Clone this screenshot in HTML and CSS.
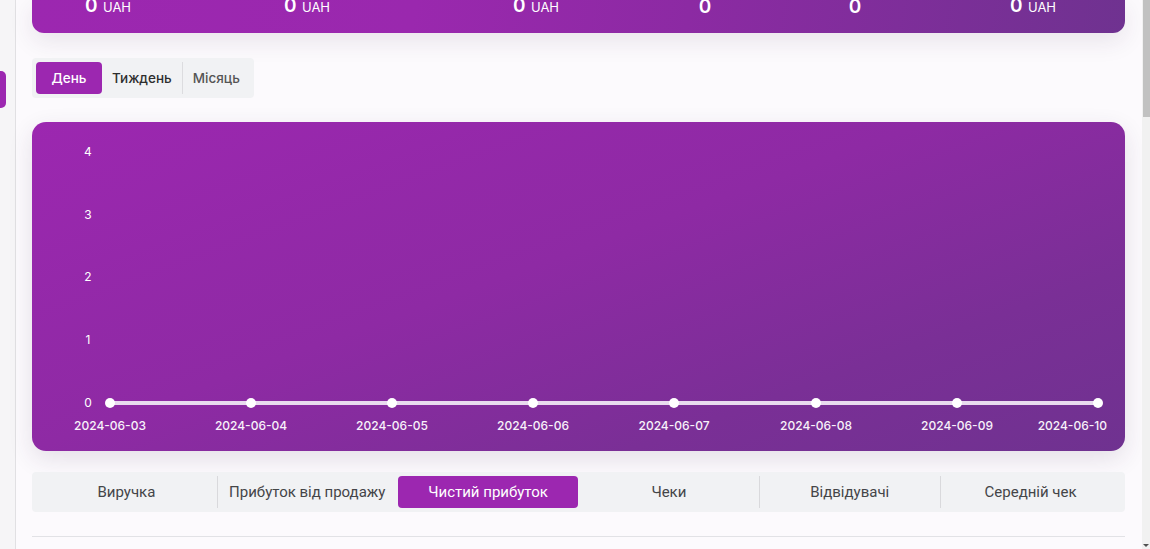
FILE: index.html
```html
<!DOCTYPE html>
<html lang="uk">
<head>
<meta charset="utf-8">
<link rel="stylesheet" href="styles.css">
</head>
<body>
<div class="app">
  <aside class="sidebar"><span class="side-tab"></span></aside>
  <main class="content">
    <section class="summary">
      <div class="sum-item c1"><b>0</b> <span>UAH</span></div>
      <div class="sum-item c2"><b>0</b> <span>UAH</span></div>
      <div class="sum-item c3"><b>0</b> <span>UAH</span></div>
      <div class="sum-item c4"><b>0</b></div>
      <div class="sum-item c5"><b>0</b></div>
      <div class="sum-item c6"><b>0</b> <span>UAH</span></div>
    </section>

    <div class="period">
      <button class="pbtn active">День</button>
      <button class="pbtn dark">Тиждень</button>
      <span class="psep"></span>
      <button class="pbtn">Місяць</button>
    </div>

    <section class="chart">
      <svg class="chart-svg" width="1093" height="329" viewBox="0 0 1093 329">
        <g class="ylab">
          <text x="56" y="34">4</text>
          <text x="56" y="97">3</text>
          <text x="56" y="159">2</text>
          <text x="56" y="222">1</text>
          <text x="56" y="285">0</text>
        </g>
        <line x1="78" y1="281" x2="1066" y2="281" stroke="#e9dbef" stroke-width="4"/>
        <g fill="#ffffff">
          <circle cx="78" cy="281" r="5"/>
          <circle cx="219" cy="281" r="5"/>
          <circle cx="360" cy="281" r="5"/>
          <circle cx="501" cy="281" r="5"/>
          <circle cx="642" cy="281" r="5"/>
          <circle cx="784" cy="281" r="5"/>
          <circle cx="925" cy="281" r="5"/>
          <circle cx="1066" cy="281" r="5"/>
        </g>
        <g class="xlab">
          <text x="78" y="308">2024-06-03</text>
          <text x="219" y="308">2024-06-04</text>
          <text x="360" y="308">2024-06-05</text>
          <text x="501" y="308">2024-06-06</text>
          <text x="642" y="308">2024-06-07</text>
          <text x="784" y="308">2024-06-08</text>
          <text x="925" y="308">2024-06-09</text>
          <text class="last" x="1075" y="308">2024-06-10</text>
        </g>
      </svg>
    </section>

    <nav class="metrics">
      <button class="mbtn">Виручка</button>
      <span class="msep"></span>
      <button class="mbtn">Прибуток від продажу</button>
      <button class="mbtn active">Чистий прибуток</button>
      <button class="mbtn">Чеки</button>
      <span class="msep"></span>
      <button class="mbtn">Відвідувачі</button>
      <span class="msep"></span>
      <button class="mbtn">Середній чек</button>
    </nav>

    <hr class="divider">
  </main>
  <div class="scrollbar">
    <div class="thumb"></div>
    <div class="arrow"></div>
  </div>
</div>
</body>
</html>
```
FILE: styles.css
```css
* { box-sizing: border-box; }
html, body {
  margin: 0;
  padding: 0;
  height: 100%;
  overflow: hidden;
  background: #fcfafd;
  font-family: "Inter", "Roboto", "Noto Sans", sans-serif;
}
.app {
  display: flex;
  height: 549px;
  width: 1150px;
}
.sidebar {
  width: 16px;
  flex: none;
  background: #f6f5f7;
  border-right: 1px solid #e1e0e3;
  padding-top: 71px;
}
.side-tab {
  display: block;
  width: 6px;
  height: 37px;
  background: #9c27b0;
  border-radius: 0 5px 5px 0;
}
.content {
  flex: 1;
  padding: 0 17px 0 16px;
  display: flex;
  flex-direction: column;
  min-width: 0;
}
.summary {
  height: 33px;
  flex: none;
  display: grid;
  grid-template-columns: 152px 246px 212px 126px 174px 182px;
  align-items: end;
  padding-bottom: 26px;
  background: linear-gradient(100deg, #9c27b0 0%, #9a28ae 35%, #8c2aa3 60%, #6f3290 100%);
  border-radius: 0 0 12px 12px;
  box-shadow: 0 8px 24px rgba(60, 30, 70, 0.10);
  color: #fff;
}
.sum-item {
  text-align: center;
  white-space: nowrap;
  line-height: 0;
}
.sum-item b {
  font-size: 19px;
  font-weight: 600;
  line-height: 0;
}
.sum-item span {
  font-size: 13px;
  font-weight: 400;
  line-height: 0;
  margin-left: 1px;
}
.period {
  margin-top: 25px;
  align-self: flex-start;
  display: flex;
  align-items: center;
  height: 40px;
  padding: 4px;
  background: #f1f2f4;
  border-radius: 4px;
}
.pbtn {
  height: 32px;
  min-width: 66px;
  padding: 0 10px;
  border: none;
  background: transparent;
  font-family: "Inter", "Roboto", sans-serif;
  font-size: 13.5px;
  font-weight: 500;
  color: #555;
  border-radius: 4px;
}
.pbtn.dark { color: #2e2e2e; }
.pbtn.active {
  background: #9c27b0;
  color: #fff;
}
.psep {
  width: 1px;
  height: 32px;
  background: #dcdcdf;
}
.chart {
  margin-top: 24px;
  height: 329px;
  flex: none;
  border-radius: 14px;
  background: linear-gradient(160deg, #9c27b0 0%, #8e2aa4 45%, #7a2f96 75%, #6f3290 100%);
  box-shadow: 0 8px 24px rgba(60, 30, 70, 0.12);
  overflow: hidden;
}
.chart-svg {
  display: block;
}
.ylab text {
  fill: #ffffff;
  font-family: "Inter", sans-serif;
  font-size: 12px;
  text-anchor: middle;
}
.xlab text {
  fill: #f8f2fa;
  font-family: "Inter", sans-serif;
  font-size: 12px;
  font-weight: 500;
  text-anchor: middle;
}
.xlab text.last {
  text-anchor: end;
}
.metrics {
  margin-top: 21px;
  height: 40px;
  flex: none;
  padding: 4px;
  display: flex;
  align-items: center;
  background: #f1f2f4;
  border-radius: 4px;
}
.mbtn {
  flex: 1;
  height: 32px;
  border: none;
  background: transparent;
  font-family: "Roboto", "Noto Sans", sans-serif;
  font-size: 15px;
  color: #444548;
  border-radius: 4px;
  padding: 0;
}
.mbtn.active {
  background: #9c27b0;
  color: #fff;
}
.msep {
  width: 1px;
  height: 32px;
  background: #d9d9dc;
  flex: none;
  margin-right: -1px;
}
.divider {
  margin: 24px 0 0;
  border: none;
  border-top: 1px solid #e2e2e6;
}
.scrollbar {
  width: 8px;
  flex: none;
  background: #f1f1f1;
  position: relative;
}
.thumb {
  margin-left: 1px;
  height: 117px;
  background: #c1c1c1;
}
.arrow {
  position: absolute;
  bottom: 2px;
  left: 1px;
  width: 0;
  height: 0;
  border-left: 3px solid transparent;
  border-right: 3px solid transparent;
  border-top: 3px solid #505050;
}
```
